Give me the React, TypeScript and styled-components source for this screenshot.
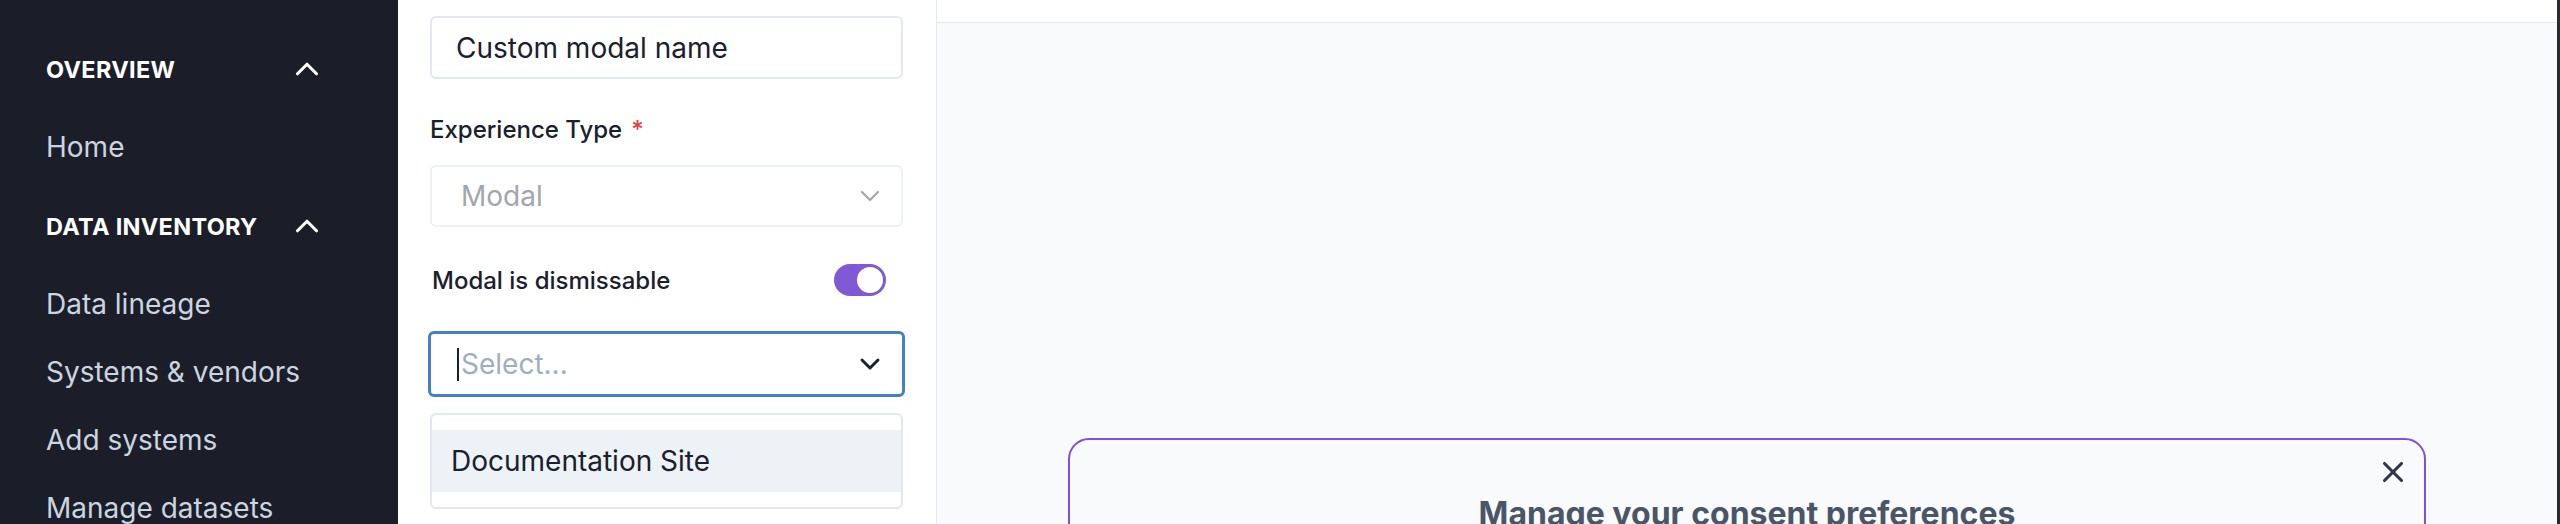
import styled, { createGlobalStyle } from "styled-components";
import { ChevronDown, ChevronUp, X } from "lucide-react";

const GlobalStyle = createGlobalStyle`
  html, body {
    margin: 0;
    padding: 0;
  }
  body {
    font-family: Inter, "Noto Sans", sans-serif;
    background: #f8fafc;
  }
  * {
    box-sizing: border-box;
  }
`;

const Page = styled.div`
  display: flex;
  width: 2560px;
  height: 524px;
  overflow: hidden;
`;

const Sidebar = styled.nav`
  width: 398px;
  flex-shrink: 0;
  background: #1b1e28;
  padding: 49px 0 0 46px;
`;

const Section = styled.div`
  margin-bottom: 25px;
`;

const SectionHeader = styled.div`
  display: flex;
  align-items: center;
  justify-content: space-between;
  width: 280px;
  height: 40px;
  margin-bottom: 24px;
  color: #ffffff;
  font-size: 23.5px;
  font-weight: 700;
  letter-spacing: 0.3px;
`;

const NavItem = styled.div`
  height: 68px;
  line-height: 68px;
  font-size: 28px;
  color: #cbd5e0;
`;

const FormPanel = styled.aside`
  width: 539px;
  flex-shrink: 0;
  background: #ffffff;
  border-right: 1px solid #e2e8f0;
  padding: 16px 33px 0 32px;
  display: flex;
  flex-direction: column;
  color: #1a202c;
`;

const TextInput = styled.input`
  height: 63px;
  width: 100%;
  border: 2px solid #e2e8f0;
  border-radius: 6px;
  padding: 0 24px;
  font: inherit;
  font-size: 28px;
  color: #1a202c;
  background: #fff;
  outline: none;
`;

const FieldLabel = styled.label`
  margin-top: 32px;
  font-size: 24px;
  font-weight: 500;
  line-height: 37px;
`;

const Required = styled.span`
  color: #e53e3e;
  margin-left: 9px;
`;

const SelectBox = styled.div<{ $focused?: boolean }>`
  height: ${(p) => (p.$focused ? "66px" : "62px")};
  margin: ${(p) => (p.$focused ? "35px -2px 0" : "17px 0 0")};
  display: flex;
  align-items: center;
  border: ${(p) => (p.$focused ? "3px solid #4380c8" : "2px solid #edf2f7")};
  border-radius: 6px;
  padding: ${(p) => (p.$focused ? "0 16px 0 26px" : "0 15px 0 29px")};
  font-size: 28px;
  color: ${(p) => (p.$focused ? "#1a202c" : "#a3a6ad")};
`;

const SelectValue = styled.span<{ $placeholder?: boolean }>`
  flex: 1;
  color: ${(p) => (p.$placeholder ? "#a0aec0" : "inherit")};
`;

const Caret = styled.span`
  width: 2px;
  height: 33px;
  background: #1a202c;
  margin-right: 2px;
`;

const ToggleRow = styled.div`
  margin-top: 37px;
  height: 32px;
  display: flex;
  align-items: center;
  justify-content: space-between;
  padding: 0 17px 0 2px;
  font-size: 24px;
  font-weight: 500;
`;

const Switch = styled.span<{ $on?: boolean }>`
  width: 52px;
  height: 32px;
  border-radius: 16px;
  background: ${(p) => (p.$on ? "#805ad5" : "#cbd5e0")};
  display: flex;
  align-items: center;
  justify-content: ${(p) => (p.$on ? "flex-end" : "flex-start")};
  padding: 0 3px;
`;

const Knob = styled.span`
  width: 26px;
  height: 26px;
  border-radius: 50%;
  background: #ffffff;
`;

const Menu = styled.div`
  margin-top: 16px;
  border: 2px solid #e2e8f0;
  border-radius: 6px;
  padding: 15px 0;
`;

const MenuOption = styled.div<{ $active?: boolean }>`
  height: 62px;
  display: flex;
  align-items: center;
  padding-left: 19px;
  font-size: 28px;
  background: ${(p) => (p.$active ? "#edf2f7" : "transparent")};
`;

const Main = styled.main`
  flex: 1;
  display: flex;
  flex-direction: column;
  min-width: 0;
`;

const TopBar = styled.header`
  height: 23px;
  flex-shrink: 0;
  background: #ffffff;
  border-bottom: 1px solid #e2e8f0;
`;

const Canvas = styled.div`
  flex: 1;
  background: #f8fafc;
  padding-top: 415px;
`;

const PreviewModal = styled.div`
  position: relative;
  width: 1358px;
  height: 240px;
  margin: 0 auto;
  border: 2px solid #7f4fe6;
  border-radius: 21px;
  padding-top: 55px;
  text-align: center;
`;

const CloseButton = styled.button`
  position: absolute;
  top: 15px;
  right: 14px;
  width: 34px;
  height: 34px;
  padding: 0;
  border: none;
  background: transparent;
  color: #2d3748;
  display: flex;
`;

const PreviewTitle = styled.h2`
  margin: 0;
  font-size: 32px;
  line-height: 38px;
  font-weight: 700;
  color: #4a5568;
`;

const ScrollEdge = styled.div`
  width: 3px;
  flex-shrink: 0;
  background: #2a2b30;
`;

const sections = [
  { title: "OVERVIEW", items: ["Home"] },
  {
    title: "DATA INVENTORY",
    items: ["Data lineage", "Systems & vendors", "Add systems", "Manage datasets"],
  },
];

export default function App() {
  return (
    <>
      <GlobalStyle />
      <Page>
        <Sidebar>
          {sections.map((s) => (
            <Section key={s.title}>
              <SectionHeader>
                {s.title}
                <ChevronUp size={38} strokeWidth={2} />
              </SectionHeader>
              {s.items.map((item) => (
                <NavItem key={item}>{item}</NavItem>
              ))}
            </Section>
          ))}
        </Sidebar>

        <FormPanel>
          <TextInput defaultValue="Custom modal name" readOnly />
          <FieldLabel>
            Experience Type<Required>*</Required>
          </FieldLabel>
          <SelectBox>
            <SelectValue>Modal</SelectValue>
            <ChevronDown size={32} strokeWidth={1.6} color="#a3a6ad" />
          </SelectBox>
          <ToggleRow>
            Modal is dismissable
            <Switch $on>
              <Knob />
            </Switch>
          </ToggleRow>
          <SelectBox $focused>
            <Caret />
            <SelectValue $placeholder>Select...</SelectValue>
            <ChevronDown size={32} strokeWidth={2.2} color="#1a202c" />
          </SelectBox>
          <Menu>
            <MenuOption $active>Documentation Site</MenuOption>
          </Menu>
        </FormPanel>

        <Main>
          <TopBar />
          <Canvas>
            <PreviewModal>
              <CloseButton aria-label="Close">
                <X size={34} strokeWidth={2.2} />
              </CloseButton>
              <PreviewTitle>Manage your consent preferences</PreviewTitle>
            </PreviewModal>
          </Canvas>
        </Main>
        <ScrollEdge />
      </Page>
    </>
  );
}
